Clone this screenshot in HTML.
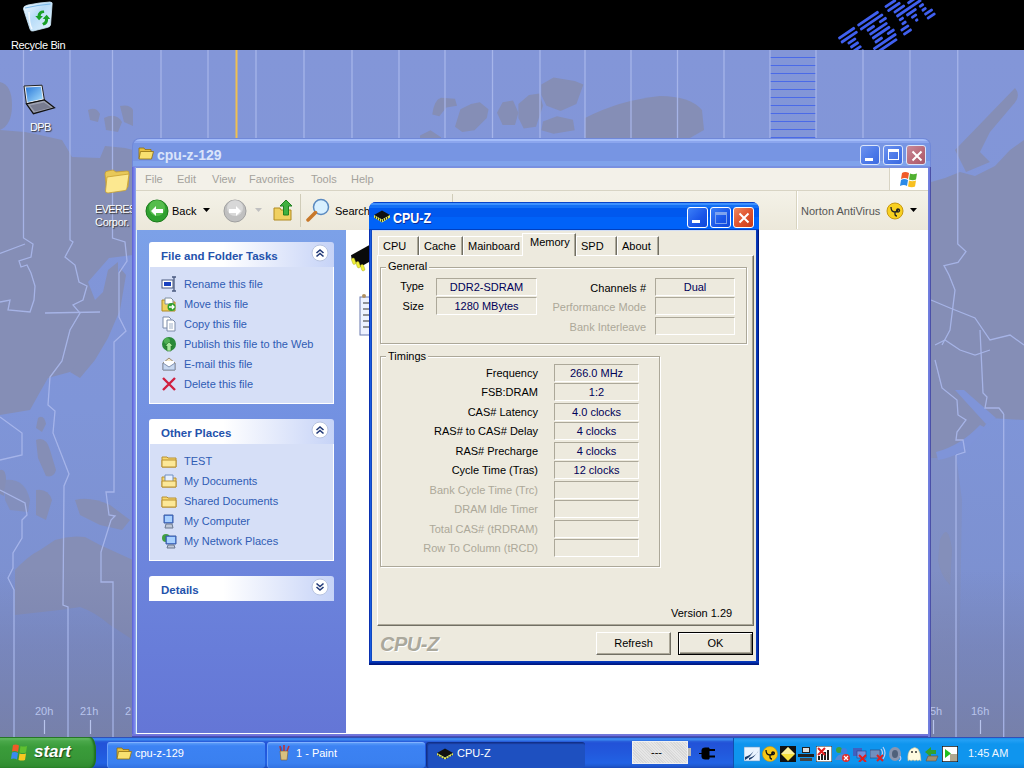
<!DOCTYPE html>
<html><head><meta charset="utf-8">
<style>
*{box-sizing:border-box}
body{margin:0;width:1024px;height:768px;overflow:hidden;position:relative;background:#8296d6;font-family:"Liberation Sans",sans-serif;font-size:11px}
.a{position:absolute}
.t{white-space:nowrap}
.xpb{width:21px;height:21px;border:1px solid #fff;border-radius:3px;background:linear-gradient(135deg,#3c80f8,#1a55e8 60%,#1048d8)}
.xpb.cl{background:linear-gradient(135deg,#f08a60,#e05530 50%,#c83a18)}
.tp{background:#edeade;border-top:1px solid #fff;border-left:1px solid #fff;border-right:1px solid #716f64;border-bottom:1px solid #716f64;box-shadow:inset -1px -1px 0 #aca899}
.tab{height:19px;background:#edeade;border-top:1px solid #fff;border-left:1px solid #fff;border-right:1px solid #716f64;text-align:left;padding-left:4px;line-height:16px;padding-top:1px;white-space:nowrap;box-shadow:inset -1px 0 0 #aca899}
.tab.sel{line-height:14px;z-index:1;border-bottom:none;padding-left:7px}
.gb{border:1px solid #aca899;box-shadow:1px 1px 0 #fff, inset 1px 1px 0 #fff}
.gt{background:#edeade;padding:0 2px;line-height:13px}
.lb{line-height:13px;color:#000}
.dis{color:#aca899;text-shadow:none}
.vb{height:18px;border-top:1px solid #aca899;border-left:1px solid #aca899;border-right:1px solid #fff;border-bottom:1px solid #fff;text-align:center;line-height:16px;color:#000058;white-space:nowrap}
.btn{background:#edeade;border-top:1px solid #fff;border-left:1px solid #fff;border-right:1px solid #716f64;border-bottom:1px solid #716f64;box-shadow:inset -1px -1px 0 #aca899;text-align:center;line-height:20px;color:#000}
.btn.def{border:1px solid #000;box-shadow:inset 1px 1px 0 #fff,inset -1px -1px 0 #716f64,inset -2px -2px 0 #aca899}
.xpbi{width:20px;height:20px;border:1px solid #dce6fa;border-radius:3px;background:linear-gradient(135deg,#6d92ee,#4a78e8 60%,#3c6ae0)}
.xpbi.cli{background:linear-gradient(135deg,#c88a98,#b86878 60%,#a85868)}
.mn{top:173px;font-size:11px;line-height:13px;color:#a4a29c}
.tbh{height:25px;border-radius:3px 3px 0 0;background:linear-gradient(90deg,#fff 0,#fff 40%,#c6d3f7 100%)}
.tbt{font:bold 11.5px/13px 'Liberation Sans',sans-serif;color:#2452ac}
.tbb{background:#d6dff7;border:1px solid #fff;border-top:none}
.tk{font-size:11px;line-height:13px;color:#2f5cb4}
.tbtn{height:26px;border-radius:3px;background:linear-gradient(#5a9cf8 0,#3c82f3 3px,#3a80f0 20px,#3070e0 26px);border-top:1px solid #80b0ff;border-left:1px solid #6aa0fa}
.tbtn.act{background:#1e50c0;border-top:1px solid #10308a;border-left:1px solid #10308a;box-shadow:inset 1px 1px 1px #1a3a9a}
.tbx{top:747px;font-size:11px;line-height:13px;color:#fff}
</style></head>
<body>
<!-- DESKTOP BACKGROUND -->
<svg class="a" style="left:0;top:0" width="1024" height="768" viewBox="0 0 1024 768">
  <defs>
    <linearGradient id="sea" x1="0" y1="0" x2="0" y2="1">
      <stop offset="0" stop-color="#8396d8"/>
      <stop offset="0.5" stop-color="#7f95d8"/>
      <stop offset="1" stop-color="#7a8cc8"/>
    </linearGradient>
    <linearGradient id="dark" x1="0" y1="0" x2="0" y2="1">
      <stop offset="0" stop-color="#747ca8" stop-opacity="0"/>
      <stop offset="0.45" stop-color="#747ca8" stop-opacity="0.45"/>
      <stop offset="1" stop-color="#767ea4" stop-opacity="0.85"/>
    </linearGradient>
  </defs>
  <rect x="0" y="50" width="1024" height="718" fill="url(#sea)"/>
  <g fill="#858eb6">
    <!-- Asia left -->
    <path d="M0 130 L25 132 L40 135 L62 140 L68 150 L72 157 L100 158 L105 146 L125 148 L133 150 L133 255 L109 258 L88 282 L95 300 L103 292 L108 270 L118 262 L118 300 L108 320 L96 345 L70 372 L48 378 L40 392 L30 410 L0 415 Z"/>
    <path d="M0 82 Q12 85 12 105 Q12 125 0 130 Z"/>
    <!-- Japan -->
    <path d="M120 268 L126 275 L120 310 L108 338 L95 360 L80 378 L70 372 L88 350 L102 322 L112 292 Z"/>
    <!-- islands -->
    <path d="M38 418 Q44 414 46 424 L42 432 L36 428 Z"/>
    <path d="M36 440 Q46 436 50 450 L56 470 Q54 478 46 476 L38 458 Z"/>
    <path d="M0 470 Q6 468 6 480 L4 496 L0 494 Z"/>
    <path d="M5 480 Q25 478 30 500 L28 512 L10 510 L5 500 Z" opacity=".8"/>
    <path d="M36 490 Q48 488 52 500 L46 520 L36 515 Z"/>
    <path d="M75 500 Q90 496 110 505 L130 520 L122 530 L100 525 L80 515 Z"/>
    <path d="M88 110 Q96 106 100 114 L98 122 L90 120 Z"/>
    <path d="M104 118 Q116 112 122 122 L118 132 L106 130 Z"/>
    <path d="M120 106 Q130 104 133 110 L133 126 L124 122 Z"/>
    <!-- Australia -->
    <path d="M15 570 Q28 556 40 550 L55 540 Q70 535 85 537 L100 545 L133 560 L133 640 L110 625 Q95 612 80 607 L60 610 L15 615 Z"/>
    <!-- Canadian islands -->
    <path d="M432.3 114.5 Q434 100 441 97.8 L455 98.7 L457 105.7 L446.4 107.5 L439.3 116.2 Z"/>
    <path d="M455 126.8 L460.4 109.2 L471 104 L479.8 102.2 L488.5 109.2 L486.8 118 L474.5 130.3 L462.2 132 Z"/>
    <path d="M497 112.7 L502.6 102.2 L513 100.4 L518.4 112.7 L515 125 L502.6 125 Z"/>
    <path d="M518.4 104 L529 95 L539.5 93.4 L543 105.7 L536 126.8 L523.7 128.5 L518.4 118 Z"/>
    <path d="M541.3 84.6 L553.6 77.6 L574.7 81 L583.4 84.6 L576.4 104 L560.6 111 L546.5 105.7 L541.3 95 Z"/>
    <path d="M543 121.5 L557 116.2 L573 119.8 L574.7 130.3 L553.6 133.8 L541.3 130.3 Z"/>
    <path d="M420 135.6 L430.5 130.3 L441 137.3 L441 138 L420 138 Z"/>
    <!-- Greenland -->
    <path d="M585 118 Q620 100 660 96 Q690 96 702 110 L704 130 L690 138 L585 138 Z"/>
    <!-- right: Scandinavia + Europe -->
    <path d="M1015 88 Q1022 96 1012 106 L990 132 L980 152 L990 162 L966 172 L955 150 Z"/>
    <path d="M931 182 L945 178 L960 172 L975 176 L995 166 L1010 150 L1024 140 L1024 420 L990 418 L975 440 L960 452 L940 458 L931 458 Z"/><path d="M931 458 L956 455 L962 500 L958 738 L931 738 Z" opacity=".45"/>
    
    
  </g>
  <path d="M955 390 L964 390 L996 418 L986 424 Z M936 452 Q960 446 980 425 L986 428 Q965 456 938 460 Z" fill="#7f94d8"/>
  <path d="M940 540 Q948 520 952 550 L950 585 Q940 575 938 560 Z" fill="#858eb6" opacity=".8"/>
  <rect x="0" y="570" width="1024" height="168" fill="url(#dark)"/>
  <!-- stripes block -->
  <g stroke="#4a6ae8" stroke-width="1">
    <path d="M770 57.5h46M770 65.5h46M770 73.5h46M770 81.5h46M770 89.5h46M770 97.5h46M770 105.5h46M770 113.5h46M770 121.5h46M770 129.5h46M770 137.5h46"/>
  </g>
  <!-- time zone lines -->
  <g stroke="#aab8ec" stroke-width="1.3" fill="none" opacity=".9">
    <path d="M23.5 50V238L33 244L31 257L19 261L21 267L27 265L31 273L35 286L34 300L30 312L8 310L10 300L0 302"/>
    <path d="M0 253.5L25 244"/>
    <path d="M70 50V240L73 242L65 257L75 265L79 282L87 286L83 300L73 305L80 313L70 330L62 361L50 377L48 405L55 411L53 433L69 474L64 486L63 605L68 607L68 738"/>
    <path d="M45 313L100 312"/>
    <path d="M112.5 50V238L125 242L127 261L119 273L119 317L126 331L114 342L114 492L106 492L109 515L115 516L111 520L101 552L101 582L113 582L113 738"/>
    <path d="M0 417L22 433L22 455L0 460"/>
    <path d="M0 490L25 503L27 515L22 520L22 538L13 553L13 568L8 578L14 590L14 738"/>
    <path d="M161 50V140M208 50V140M256 50V140M304 50V140M352 50V140M399 50V140M445 50V140M492.5 50V140M540 50V140M585 50V140M631 50V140M677.5 50V140M724 50V140M770 50V140M816 50V140M863 50V140M910 50V140"/>
    <path d="M957.75 50V244L966 251.5L958 262.5L944 265.6L949 275L955 290L950 330L942 345"/>
    <path d="M956 455V738"/>
    <path d="M1003.7 414V738"/>
    <path d="M931 300L950 308L975 318L990 340L1010 335L1024 345"/>
    <path d="M935 345L945 340L960 350L975 355L990 350"/>
    <path d="M935 360L942 388L957 400L958 415L966 420L957 432L956 440L963 440L965 452L956 455"/>
    <path d="M980 330L983 393L987 397L985 408L999 408L1003.7 414"/>
  </g>
  <path d="M236.5 50V138" stroke="#f0c050" stroke-width="2"/>
  <!-- time labels -->
  <g font-family="Liberation Sans" font-size="11" fill="#b8c4ec">
    <text x="35" y="715">20h</text><text x="80" y="715">21h</text><text x="125" y="715">2</text>
    <text x="930" y="715">5h</text><text x="971" y="715">16h</text>
  </g>
  <g stroke="#b8c4ec" stroke-width="1.2"><path d="M44.5 720v14M90.5 720v14M933.5 720v14M980.5 720v14"/></g>
</svg>
<div class="a" style="left:0;top:0;width:1024px;height:50px;background:#000"></div>
<!-- IBM logo -->
<svg class="a" style="left:0;top:0" width="1024" height="50" viewBox="0 0 1024 50">
  <g transform="translate(837.6,37.5) rotate(-34) scale(1.1,1.05)" fill="#4060f0"><rect x="0" y="0.0" width="18" height="2.7" rx="1"/><rect x="0" y="4.5" width="18" height="2.7" rx="1"/><rect x="4.5" y="9.0" width="9.0" height="2.7" rx="1"/><rect x="4.5" y="13.5" width="9.0" height="2.7" rx="1"/><rect x="4.5" y="18.0" width="9.0" height="2.7" rx="1"/><rect x="4.5" y="22.5" width="9.0" height="2.7" rx="1"/><rect x="0" y="27.0" width="18" height="2.7" rx="1"/><rect x="0" y="31.5" width="18" height="2.7" rx="1"/><rect x="21" y="0.0" width="23" height="2.7" rx="1"/><rect x="21" y="4.5" width="25" height="2.7" rx="1"/><rect x="25.5" y="9.0" width="8.5" height="2.7" rx="1"/><rect x="39" y="9.0" width="8" height="2.7" rx="1"/><rect x="25.5" y="13.5" width="19.5" height="2.7" rx="1"/><rect x="25.5" y="18.0" width="19.5" height="2.7" rx="1"/><rect x="25.5" y="22.5" width="8.5" height="2.7" rx="1"/><rect x="39" y="22.5" width="8" height="2.7" rx="1"/><rect x="21" y="27.0" width="25" height="2.7" rx="1"/><rect x="21" y="31.5" width="23" height="2.7" rx="1"/><rect x="51" y="0.0" width="12" height="2.7" rx="1"/><rect x="74" y="0.0" width="12" height="2.7" rx="1"/><rect x="51" y="4.5" width="14" height="2.7" rx="1"/><rect x="72" y="4.5" width="14" height="2.7" rx="1"/><rect x="55" y="9.0" width="12" height="2.7" rx="1"/><rect x="70" y="9.0" width="12" height="2.7" rx="1"/><rect x="55" y="13.5" width="27" height="2.7" rx="1"/><rect x="55" y="18.0" width="5" height="2.7" rx="1"/><rect x="63" y="18.0" width="11" height="2.7" rx="1"/><rect x="77" y="18.0" width="5" height="2.7" rx="1"/><rect x="55" y="22.5" width="5" height="2.7" rx="1"/><rect x="65.5" y="22.5" width="6.0" height="2.7" rx="1"/><rect x="77" y="22.5" width="5" height="2.7" rx="1"/><rect x="51" y="27.0" width="9" height="2.7" rx="1"/><rect x="67" y="27.0" width="3" height="2.7" rx="1"/><rect x="77" y="27.0" width="9" height="2.7" rx="1"/><rect x="51" y="31.5" width="9" height="2.7" rx="1"/><rect x="77" y="31.5" width="9" height="2.7" rx="1"/></g>
</svg>
<!-- desktop icons -->
<svg class="a" style="left:20px;top:0px" width="36" height="34" viewBox="0 0 36 34">
  <defs><linearGradient id="rb" x1="0" y1="0" x2="1" y2="1"><stop offset="0" stop-color="#f4faff"/><stop offset=".45" stop-color="#b8dcf8"/><stop offset="1" stop-color="#e4f4ff"/></linearGradient></defs>
  <path d="M3.5 9 Q3 6 8 5 Q20 2.5 30 2 Q33 2 32 5 L30.5 25 Q30 27 27 27.5 L13 31 Q10.5 31.5 10 29 Z" fill="url(#rb)" stroke="#d0ecfc" stroke-width=".8"/>
  <path d="M5 8 Q18 5 30.5 4" stroke="#7ab8e8" stroke-width="1.2" fill="none"/>
  <path d="M9 12 Q9 24 12 29" stroke="#fff" stroke-width="1.5" fill="none" opacity=".8"/>
  <path d="M24 10.5 a5.5 5.5 0 0 0 -6.5 5.5 l-2.2 0 3.8 4.2 3.8 -4.2 -2.2 0 a3.2 3.2 0 0 1 3.5 -3 z" fill="#18a028"/>
  <path d="M23.5 25.5 a5.5 5.5 0 0 0 4.5 -6.5 l2.2 0 -3.5 -4.3 -4 4 2.2 0.2 a3.2 3.2 0 0 1 -2.8 4 z" fill="#18a028"/>
</svg>
<div class="a t" style="left:11px;top:39px;font-size:11px;line-height:13px;color:#fff;letter-spacing:-0.35px">Recycle Bin</div>
<svg class="a" style="left:20px;top:82px" width="38" height="34" viewBox="0 0 38 34">
  <defs><linearGradient id="scr" x1="0" y1="0" x2="1" y2="1"><stop offset="0" stop-color="#2a78d8"/><stop offset="1" stop-color="#a8e0ff"/></linearGradient></defs>
  <path d="M4 4 L22 3.2 L24.4 18 L6.4 21.9 Z" fill="#e8ecf4" stroke="#222" stroke-width="1"/>
  <path d="M5.8 5.5 L20.8 4.8 L22.6 16.8 L7.6 20 Z" fill="url(#scr)"/>
  <path d="M6.4 21.9 L24.4 18 L34.5 25.8 L13.4 31.7 Z" fill="#9ca0b0" stroke="#111" stroke-width="1.2"/>
  <path d="M10 23.5 L24 20.5 L31 25.5 L15 29.5 Z" fill="#787c90"/>
</svg>
<div class="a t" style="left:30px;top:121px;font-size:11px;line-height:13px;color:#fff;letter-spacing:-0.6px;text-shadow:1px 1px 1px #333">DPB</div>
<svg class="a" style="left:103px;top:169px" width="28" height="26" viewBox="0 0 28 26">
  <path d="M2 5 Q2 2 5 2 L10 1 L13 3 L24 2 Q26 2 26 4 L25 18 L4 23 Z" fill="#e8c858" stroke="#c8a030" stroke-width=".8"/>
  <path d="M4 8 L26 5 L24 19 Q24 21 22 21.5 L5 24 Q2.5 24 2.5 22 Z" fill="#fce890" stroke="#c8a030" stroke-width=".8"/>
</svg>
<div class="a t" style="left:95px;top:203px;font-size:11px;line-height:13px;color:#fff;letter-spacing:-0.7px;text-shadow:1px 1px 1px #333">EVERES</div>
<div class="a t" style="left:95px;top:216px;font-size:11px;line-height:13px;color:#fff;letter-spacing:-0.3px;text-shadow:1px 1px 1px #333">Corpor.</div>
<!-- EXPLORER WINDOW -->
<div class="a" style="left:132px;top:138px;width:799px;height:599px;background:#7088d8;border-radius:8px 8px 0 0"></div>
<div class="a" style="left:133px;top:139px;width:797px;height:29px;background:#8ca6ee;border-radius:7px 7px 0 0;background:linear-gradient(#a3bcf9 0,#a3bcf9 2px,#8ca6ee 2px,#8ca6ee 4px,#7795e3 4px,#7795e3 22px,#7fa2eb 22px,#7fa2eb 27px,#7890e0 27px,#7890e0 29px,#7a96e4 29px)"></div>
<div class="a" style="left:132px;top:167px;width:4px;height:570px;background:linear-gradient(90deg,#6068d8 0,#6068d8 1px,#7078e4 1px,#7078e4 2px,#7a86ec 2px,#7a86ec 3px,#8aa0e8 3px)"></div><div class="a" style="left:132px;top:734px;width:799px;height:3px;background:linear-gradient(#7078d8 0,#7078d8 1px,#7070e0 1px,#7070e0 2px,#4a50b0 2px)"></div>
<div class="a" style="left:928px;top:167px;width:3px;height:570px;background:linear-gradient(90deg,#7080dc 0,#7080dc 1px,#7078e0 1px,#7078e0 2px,#4a50a8 2px)"></div>
<svg class="a" style="left:138px;top:146px" width="16" height="14" viewBox="0 0 16 14"><path d="M1 2h5l1 1.5h6v9H1z" fill="#e8c040" stroke="#907010" stroke-width=".8"/><path d="M2.5 5.5h13l-2 7.5H1z" fill="#f8e070" stroke="#907010" stroke-width=".8"/></svg>
<div class="a t" style="left:157px;top:146px;font:bold 14px/18px 'Liberation Sans',sans-serif;color:#dae4fa;letter-spacing:0px">cpu-z-129</div>
<div class="a xpbi" style="left:860px;top:145px"><div class="a" style="left:4px;top:12px;width:8px;height:3px;background:#fff"></div></div>
<div class="a xpbi" style="left:883px;top:145px"><div class="a" style="left:4px;top:3px;width:11px;height:11px;border:1px solid #fff;border-top-width:3px"></div></div>
<div class="a xpbi cli" style="left:906px;top:145px"><svg class="a" style="left:4px;top:4px" width="12" height="12"><path d="M1.5 1.5L10.5 10.5M10.5 1.5L1.5 10.5" stroke="#fff" stroke-width="2"/></svg></div>
<div class="a" style="left:136px;top:168px;width:792px;height:566px;background:#fff"></div>
<!-- menu bar -->
<div class="a" style="left:136px;top:168px;width:792px;height:23px;background:#f3f1e9;border-bottom:1px solid #d8d4c4"></div>
<div class="a" style="left:889px;top:168px;width:39px;height:22px;background:#fff;border-left:1px solid #d8d4c4"></div>
<svg class="a" style="left:899px;top:170px" width="20" height="18" viewBox="0 0 20 18"><path d="M3 3q3-2 7 0l-1 6q-3-2-7 0z" fill="#f05a28"/><path d="M11 3.5q3 1.5 7 0l-1 6q-3 1.5-7 0z" fill="#50b030"/><path d="M2 10q3-2 7 0l-1 6q-3-2-7 0z" fill="#2a8ae8"/><path d="M10 10.5q3 1.5 7 0l-1 6q-3 1.5-7 0z" fill="#f8c020"/></svg>
<div class="a t mn" style="left:145px">File</div>
<div class="a t mn" style="left:177px">Edit</div>
<div class="a t mn" style="left:212px">View</div>
<div class="a t mn" style="left:249px">Favorites</div>
<div class="a t mn" style="left:311px">Tools</div>
<div class="a t mn" style="left:351px">Help</div>
<!-- toolbar -->
<div class="a" style="left:136px;top:191px;width:792px;height:39px;background:linear-gradient(#f4f2e8,#ece8da)"></div>
<div class="a" style="left:300px;top:194px;width:1px;height:33px;background:#d0ccb8"></div>
<div class="a" style="left:452px;top:194px;width:1px;height:33px;background:#d0ccb8"></div>
<div class="a" style="left:796px;top:191px;width:1px;height:38px;background:#d8d4c0;box-shadow:1px 0 0 #fff"></div>
<svg class="a" style="left:145px;top:199px" width="24" height="24" viewBox="0 0 24 24"><circle cx="12" cy="12" r="11" fill="#30a030" stroke="#1a7a1a"/><circle cx="12" cy="9" r="8" fill="#70d060" opacity=".6"/><path d="M6 12l5-5v3h7v4h-7v3z" fill="#fff"/></svg>
<div class="a t" style="left:172px;top:205px;font-size:11px;line-height:13px;color:#000">Back</div>
<svg class="a" style="left:203px;top:208px" width="8" height="5"><path d="M0 0h7l-3.5 4z" fill="#000"/></svg>
<svg class="a" style="left:223px;top:199px" width="24" height="24" viewBox="0 0 24 24"><circle cx="12" cy="12" r="11" fill="#c0c0c0" stroke="#a0a0a0"/><circle cx="12" cy="9" r="8" fill="#e8e8e8" opacity=".6"/><path d="M18 12l-5-5v3H6v4h7v3z" fill="#fff"/></svg>
<svg class="a" style="left:255px;top:208px" width="8" height="5"><path d="M0 0h7l-3.5 4z" fill="#c0c0c0"/></svg>
<svg class="a" style="left:273px;top:198px" width="22" height="24" viewBox="0 0 22 24"><path d="M1 10h6l1 2h10v10H1z" fill="#f0d060" stroke="#b08a20"/><path d="M13 2l6 6h-3.5v9h-5V8H7z" fill="#40b040" stroke="#208020"/></svg>
<svg class="a" style="left:306px;top:198px" width="25" height="25" viewBox="0 0 25 25"><circle cx="15" cy="9" r="7.5" fill="#d8f0ff" stroke="#5a8ac0" stroke-width="1.5"/><path d="M9.5 14.5L2 22" stroke="#c8782a" stroke-width="3.5" stroke-linecap="round"/></svg>
<div class="a t" style="left:335px;top:205px;font-size:11px;line-height:13px;color:#000">Search</div>
<div class="a t" style="left:801px;top:205px;font-size:11px;line-height:13px;color:#555">Norton AntiVirus</div>
<svg class="a" style="left:886px;top:202px" width="18" height="18" viewBox="0 0 18 18"><circle cx="9" cy="9" r="8" fill="#f8d020" stroke="#c89810"/><path d="M5 5q0 5 4 5q3 0 3-3M12 7a1.5 1.5 0 1 0 .1 0M9 10v2q0 2 2 2" stroke="#222" stroke-width="1.3" fill="none"/></svg>
<svg class="a" style="left:910px;top:208px" width="8" height="5"><path d="M0 0h7l-3.5 4z" fill="#000"/></svg>
<!-- left pane -->
<div class="a" style="left:136px;top:230px;width:210px;height:504px;background:linear-gradient(#7ca1e8,#6476d6);border-left:1px solid #e0f4fc;border-bottom:1px solid #fff"></div>
<div class="a tbh" style="left:149px;top:242px;width:185px"></div>
<div class="a t tbt" style="left:161px;top:250px">File and Folder Tasks</div>
<div class="a" style="left:311px;top:244px"><svg width="18" height="18"><circle cx="9" cy="9" r="8" fill="#fff" stroke="#b8c4e0"/><path d="M5.5 9l3.5-3 3.5 3M5.5 12.5l3.5-3 3.5 3" stroke="#223a78" stroke-width="1.6" fill="none"/></svg></div>
<div class="a tbb" style="left:149px;top:267px;width:185px;height:137px"></div>
<div class="a" style="left:161px;top:276px;width:16px;height:16px"><svg width="16" height="16"><rect x="1" y="4" width="11" height="8" fill="#fff" stroke="#4a5a80"/><rect x="3" y="6" width="7" height="4" fill="#1840c0"/><path d="M13 1v14M11 1h4M11 15h4" stroke="#4a5a80" stroke-width="1.3"/></svg></div><div class="a t tk" style="left:184px;top:278px">Rename this file</div>
<div class="a" style="left:161px;top:296px;width:16px;height:16px"><svg width="16" height="16"><path d="M1 4h5l1 2h7v9H1z" fill="#f0d060" stroke="#b08a20"/><path d="M4 2h6l2 2v4H4z" fill="#fff" stroke="#8090a0"/><circle cx="10.5" cy="11" r="4" fill="#30a030"/><path d="M8 11h5M11 9l2 2-2 2" stroke="#fff" stroke-width="1.3" fill="none"/></svg></div><div class="a t tk" style="left:184px;top:298px">Move this file</div>
<div class="a" style="left:161px;top:316px;width:16px;height:16px"><svg width="16" height="16"><path d="M2 1h6l2 2v9H2z" fill="#fff" stroke="#7a8aa8"/><path d="M6 4h6l2 2v9H6z" fill="#fff" stroke="#7a8aa8"/><path d="M8 8h4M8 10h4M8 12h4" stroke="#a0b0c8"/></svg></div><div class="a t tk" style="left:184px;top:318px">Copy this file</div>
<div class="a" style="left:161px;top:336px;width:16px;height:16px"><svg width="16" height="16"><circle cx="8" cy="8" r="7" fill="#2a8a3a"/><circle cx="6" cy="5" r="3" fill="#60c060" opacity=".7"/><path d="M8 6l4 4h-2v5H6v-5H4z" fill="#a8e8a0" stroke="#207020" stroke-width=".6"/></svg></div><div class="a t tk" style="left:184px;top:338px">Publish this file to the Web</div>
<div class="a" style="left:161px;top:356px;width:16px;height:16px"><svg width="16" height="16"><path d="M2 7l6-5 6 5v7H2z" fill="#f4e8c8" stroke="#9a8a70"/><rect x="3" y="5" width="10" height="6" fill="#fff"/><path d="M2 7l6 4 6-4v7H2z" fill="#c8d8f0" stroke="#8090b0"/></svg></div><div class="a t tk" style="left:184px;top:358px">E-mail this file</div>
<div class="a" style="left:161px;top:376px;width:16px;height:16px"><svg width="16" height="16"><path d="M2 2L14 14M14 2L2 14" stroke="#d02040" stroke-width="2.4"/></svg></div><div class="a t tk" style="left:184px;top:378px">Delete this file</div>
<div class="a tbh" style="left:149px;top:419px;width:185px"></div>
<div class="a t tbt" style="left:161px;top:427px">Other Places</div>
<div class="a" style="left:311px;top:421px"><svg width="18" height="18"><circle cx="9" cy="9" r="8" fill="#fff" stroke="#b8c4e0"/><path d="M5.5 9l3.5-3 3.5 3M5.5 12.5l3.5-3 3.5 3" stroke="#223a78" stroke-width="1.6" fill="none"/></svg></div>
<div class="a tbb" style="left:149px;top:444px;width:185px;height:117px"></div>
<div class="a" style="left:161px;top:453px;width:16px;height:16px"><svg width="16" height="16"><path d="M1 4h5l1 1h8v9H1z" fill="#f8d870" stroke="#b89030"/><path d="M1 7h14v7H1z" fill="#fce898" stroke="#b89030"/></svg></div><div class="a t tk" style="left:184px;top:455px">TEST</div>
<div class="a" style="left:161px;top:473px;width:16px;height:16px"><svg width="16" height="16"><path d="M1 4h5l1 1h8v9H1z" fill="#f8d870" stroke="#b89030"/><path d="M4 2h8v7H4z" fill="#e8f0ff" stroke="#7090c0"/><path d="M1 8h14v6H1z" fill="#fce898" stroke="#b89030"/></svg></div><div class="a t tk" style="left:184px;top:475px">My Documents</div>
<div class="a" style="left:161px;top:493px;width:16px;height:16px"><svg width="16" height="16"><path d="M1 4h5l1 1h8v9H1z" fill="#f8d870" stroke="#b89030"/><path d="M1 7h14v7H1z" fill="#fce898" stroke="#b89030"/></svg></div><div class="a t tk" style="left:184px;top:495px">Shared Documents</div>
<div class="a" style="left:161px;top:513px;width:16px;height:16px"><svg width="16" height="16"><path d="M3 2h9v8H3z" fill="#5a8ae8" stroke="#3a5aa0"/><path d="M4 3h7v6H4z" fill="#a8d0ff"/><path d="M5 11h6l1 4H4z" fill="#c0c8d8" stroke="#6a7890"/></svg></div><div class="a t tk" style="left:184px;top:515px">My Computer</div>
<div class="a" style="left:161px;top:533px;width:16px;height:16px"><svg width="16" height="16"><circle cx="5" cy="5" r="4" fill="#40a040"/><path d="M5 3h10v8H5z" fill="#5a8ae8" stroke="#3a5aa0"/><path d="M6 4h8v6H6z" fill="#a8d0ff"/><path d="M7 12h6l1 3H6z" fill="#c0c8d8" stroke="#6a7890"/></svg></div><div class="a t tk" style="left:184px;top:535px">My Network Places</div>
<div class="a tbh" style="left:149px;top:576px;width:185px;border-radius:3px 3px 0 0"></div>
<div class="a t tbt" style="left:161px;top:584px">Details</div>
<div class="a" style="left:311px;top:578px"><svg width="18" height="18"><circle cx="9" cy="9" r="8" fill="#fff" stroke="#b8c4e0"/><path d="M5.5 5.5l3.5 3 3.5-3M5.5 9l3.5 3 3.5-3" stroke="#223a78" stroke-width="1.6" fill="none"/></svg></div>
<!-- content icons -->
<svg class="a" style="left:349px;top:243px" width="21" height="32" viewBox="0 0 21 32"><path d="M2 12.3 L20 2.2 L20 19 L11.3 24 L2.7 16 Z" fill="#0a0a0a"/><g fill="#f0f038" stroke="#a0a020" stroke-width=".4"><rect x="3" y="15" width="3.2" height="6.5" rx="1.4" transform="rotate(-20 4.5 18)"/><rect x="7.5" y="18.5" width="3.2" height="6.5" rx="1.4" transform="rotate(-20 9 21.5)"/><rect x="12" y="21.5" width="3.2" height="6.5" rx="1.4" transform="rotate(-20 13.5 24.5)"/></g></svg>
<svg class="a" style="left:359px;top:293px" width="11" height="44" viewBox="0 0 11 44"><rect x="1" y="4" width="10" height="38" fill="#eef2ff" stroke="#6a7ab0"/><path d="M4 10h7M4 16h7M4 22h7M4 28h7M4 34h7" stroke="#333" stroke-width="1.2"/><circle cx="5" cy="3" r="2" fill="#b09060"/></svg>

<!-- CPU-Z WINDOW -->
<div class="a" style="left:369px;top:202px;width:390px;height:463px;background:#0831d9;border-radius:7px 7px 0 0;overflow:hidden">
  <div class="a" style="left:0;top:0;width:390px;height:28px;background:linear-gradient(#0843c8 0,#0843c8 1px,#3d91ff 1px,#3d91ff 3px,#1470f5 3px,#1470f5 6px,#0058ee 6px,#0058ee 15px,#0062f8 15px,#0062f8 27px,#0040c0 27px)"></div>
  <div class="a" style="left:0;top:28px;width:1px;height:435px;background:#0a30b0"></div>
  <div class="a" style="left:1px;top:28px;width:1px;height:435px;background:#1a5ce0"></div>
  <div class="a" style="left:2px;top:28px;width:1px;height:435px;background:#1048c0"></div>
  <div class="a" style="left:387px;top:28px;width:1px;height:435px;background:#0838b8"></div>
  <div class="a" style="left:388px;top:28px;width:1px;height:435px;background:#0030b0"></div>
  <div class="a" style="left:389px;top:28px;width:1px;height:435px;background:#001880"></div>
  <div class="a" style="left:0;top:459px;width:390px;height:4px;background:linear-gradient(#0838b8 0,#0838b8 1px,#0030b0 1px,#0030b0 2px,#002090 2px,#002090 3px,#001880 3px)"></div>
</div>
<div class="a" style="left:372px;top:230px;width:384px;height:431px;background:#edeade;border-top:1px solid #d0dcf4"></div>
<!-- title icon -->
<svg class="a" style="left:373px;top:210px" width="18" height="13" viewBox="0 0 18 13">
  <path d="M1 5 L9 0.5 L17 5 L9 9.5 Z" fill="#111"/>
  <path d="M1 5 L9 9.5 L17 5 L17 7.5 L9 12.5 L1 7.5 Z" fill="#e8ec50"/>
  <path d="M2.5 6.3v2.2M4.5 7.4v2.2M6.5 8.5v2.2M8.5 9.5v2.4M10.5 8.8v2.2M12.5 7.7v2.2M14.5 6.6v2.2" stroke="#2a2a10" stroke-width="0.9"/>
</svg>
<div class="a t" style="left:393px;top:209px;font:bold 14.5px/18px 'Liberation Sans',sans-serif;color:#fff;transform:scaleX(0.86);transform-origin:0 0;text-shadow:1px 1px 0 #0a2a9a">CPU-Z</div>
<!-- title buttons -->
<div class="a xpb" style="left:687px;top:207px"><div class="a" style="left:4px;top:12px;width:8px;height:3px;background:#fff"></div></div>
<div class="a xpb" style="left:710px;top:207px"><div class="a" style="left:4px;top:4px;width:12px;height:12px;border:1px solid #7fa3ee;border-top-width:3px"></div></div>
<div class="a xpb cl" style="left:733px;top:207px"><svg class="a" style="left:4px;top:4px" width="12" height="12"><path d="M1.5 1.5L10.5 10.5M10.5 1.5L1.5 10.5" stroke="#fff" stroke-width="2"/></svg></div>
<!-- tabs -->
<div class="a tp" style="left:377px;top:255px;width:377px;height:371px"></div>
<div class="a tab" style="left:378px;top:236px;width:41px">CPU</div>
<div class="a tab" style="left:419px;top:236px;width:44px">Cache</div>
<div class="a tab" style="left:463px;top:236px;width:60px;border-right:none">Mainboard</div>
<div class="a tab sel" style="left:522px;top:233px;width:54px;height:23px">Memory</div>
<div class="a tab" style="left:576px;top:236px;width:41px">SPD</div>
<div class="a tab" style="left:617px;top:236px;width:42px">About</div>
<!-- General group -->
<div class="a gb" style="left:380px;top:267px;width:367px;height:77px"></div>
<div class="a t gt" style="left:386px;top:260px">General</div>
<div class="a t lb" style="right:600px;top:280px">Type</div><div class="a vb" style="left:436px;top:278px;width:101px">DDR2-SDRAM</div>
<div class="a t lb" style="right:600px;top:300px">Size</div><div class="a vb" style="left:436px;top:297px;width:101px">1280 MBytes</div>
<div class="a t lb" style="right:378px;top:282px">Channels #</div><div class="a vb" style="left:655px;top:278px;width:80px">Dual</div>
<div class="a t lb dis" style="right:378px;top:301px">Performance Mode</div><div class="a vb" style="left:655px;top:297px;width:80px"></div>
<div class="a t lb dis" style="right:378px;top:321px">Bank Interleave</div><div class="a vb" style="left:655px;top:317px;width:80px"></div>
<!-- Timings group -->
<div class="a gb" style="left:380px;top:356px;width:280px;height:211px"></div>
<div class="a t gt" style="left:386px;top:350px">Timings</div>
<div class="a t lb" style="right:486px;top:367px">Frequency</div><div class="a vb" style="left:554px;top:364px;width:85px">266.0 MHz</div>
<div class="a t lb" style="right:486px;top:386px">FSB:DRAM</div><div class="a vb" style="left:554px;top:383px;width:85px">1:2</div>
<div class="a t lb" style="right:486px;top:406px">CAS# Latency</div><div class="a vb" style="left:554px;top:403px;width:85px">4.0 clocks</div>
<div class="a t lb" style="right:486px;top:425px">RAS# to CAS# Delay</div><div class="a vb" style="left:554px;top:422px;width:85px">4 clocks</div>
<div class="a t lb" style="right:486px;top:445px">RAS# Precharge</div><div class="a vb" style="left:554px;top:442px;width:85px">4 clocks</div>
<div class="a t lb" style="right:486px;top:464px">Cycle Time (Tras)</div><div class="a vb" style="left:554px;top:461px;width:85px">12 clocks</div>
<div class="a t lb dis" style="right:486px;top:484px">Bank Cycle Time (Trc)</div><div class="a vb" style="left:554px;top:481px;width:85px"></div>
<div class="a t lb dis" style="right:486px;top:503px">DRAM Idle Timer</div><div class="a vb" style="left:554px;top:500px;width:85px"></div>
<div class="a t lb dis" style="right:486px;top:523px">Total CAS# (tRDRAM)</div><div class="a vb" style="left:554px;top:520px;width:85px"></div>
<div class="a t lb dis" style="right:486px;top:542px">Row To Column (tRCD)</div><div class="a vb" style="left:554px;top:539px;width:85px"></div>
<div class="a t lb" style="left:671px;top:607px">Version 1.29</div>
<div class="a t" style="left:380px;top:632px;font:italic bold 20px/24px 'Liberation Sans',sans-serif;color:#aaa89c;text-shadow:1px 1px 0 #fff;letter-spacing:-0.5px">CPU-Z</div>
<div class="a btn" style="left:596px;top:632px;width:75px;height:23px">Refresh</div>
<div class="a btn def" style="left:678px;top:632px;width:75px;height:23px">OK</div>

<!-- TASKBAR -->
<div class="a" style="left:0;top:737px;width:1024px;height:31px;background:linear-gradient(#3050b8 0,#3050b8 1px,#3a80ec 1px,#3a8af0 3px,#2a62dc 4px,#2252d8 6px,#2258dc 15px,#2262e4 26px,#1e58d0 29px,#1a48b8 31px)"></div>
<div class="a" style="left:0;top:737px;width:96px;height:31px;background:linear-gradient(#2a7a2a 0,#2a7a2a 1px,#64bc64 1px,#4aa84a 4px,#3a9c3a 10px,#379637 22px,#2f8a2f 31px);border-radius:0 6px 5px 0 / 0 14px 10px 0;box-shadow:inset -2px 0 2px #1e6e1e"></div>
<svg class="a" style="left:11px;top:744px" width="18" height="17" viewBox="0 0 18 17"><path d="M2 1q3-1 6 0.5l-1 6.5q-3-1.5-6-0.5z" fill="#f05a28"/><path d="M9.5 2q3 1 6.5 0l-1 6.5q-3 1-6.5 0z" fill="#60c030"/><path d="M1 8.5q3-1 6 0.5l-1 6.5q-3-1.5-6-0.5z" fill="#3a8af0"/><path d="M8.5 9.5q3 1 6.5 0l-1 6.5q-3 1-6.5 0z" fill="#f8c820"/></svg>
<div class="a t" style="left:34px;top:741px;font:italic bold 17px/22px 'Liberation Sans',sans-serif;color:#fff;text-shadow:1px 1px 1px #1a4a1a">start</div>
<div class="a tbtn" style="left:107px;top:742px;width:158px"></div>
<div class="a" style="left:116px;top:746px"><svg width="16" height="14" viewBox="0 0 16 14"><path d="M1 2h5l1 1.5h6v9H1z" fill="#e8c040" stroke="#907010" stroke-width=".8"/><path d="M2.5 5.5h13l-2 7.5H1z" fill="#f8e070" stroke="#907010" stroke-width=".8"/></svg></div>
<div class="a t tbx" style="left:135px">cpu-z-129</div>
<div class="a tbtn" style="left:267px;top:742px;width:158px"></div>
<svg class="a" style="left:277px;top:745px" width="14" height="16" viewBox="0 0 14 16"><path d="M3 6h8l-1 9H4z" fill="#d8c080" stroke="#806030" stroke-width=".6"/><path d="M4 6L3 1M7 6V0M10 6l2-5" stroke="#c03030" stroke-width="1.5"/><path d="M5 6l-1-4" stroke="#3060c0" stroke-width="1.2"/></svg>
<div class="a t tbx" style="left:296px">1 - Paint</div>
<div class="a tbtn act" style="left:426px;top:742px;width:159px"></div>
<div class="a" style="left:436px;top:748px"><svg width="18" height="12" viewBox="0 0 18 12"><path d="M1 5 L9 0.5 L17 5 L9 9.5 Z" fill="#111"/><path d="M1 5 L9 9.5 L17 5 L17 7 L9 11.5 L1 7 Z" fill="#e0e850"/><path d="M2.5 6.5v1.5M5 8v1.5M7.5 9.5v1.5M10.5 9.5v1.5M13 8v1.5M15.5 6.5v1.5" stroke="#333" stroke-width="0.9"/></svg></div>
<div class="a t tbx" style="left:457px">CPU-Z</div>
<!-- battery -->
<div class="a" style="left:632px;top:741px;width:56px;height:23px;background:repeating-linear-gradient(45deg,#e6e6e6 0,#e6e6e6 1px,#d8d8d8 1px,#d8d8d8 2px);border:1px solid #f0f0f0"></div>
<div class="a" style="left:688px;top:748px;width:3px;height:8px;background:#b8b8b8"></div>
<div class="a t" style="left:651px;top:746px;font-size:11px;line-height:13px;color:#000">---</div>
<svg class="a" style="left:699px;top:747px" width="17" height="13" viewBox="0 0 17 13"><path d="M0 6.5h3M3 3q0-2 3-2h4v11H6q-3 0-3-2z" fill="#000" stroke="#000"/><path d="M10 3h6M10 9.5h6" stroke="#000" stroke-width="2"/></svg>
<!-- tray -->
<div class="a" style="left:733px;top:738px;width:291px;height:30px;background:linear-gradient(#1a8ee8 0,#24a0f4 2px,#0f95ee 6px,#0f95ee 25px,#0b80d8 30px);border-left:1px solid #1050b0"></div>
<div class="a" style="left:744px;top:746px;width:16px;height:16px"><svg width="16" height="16"><rect x="0" y="1" width="16" height="14" fill="#eaf4ff" stroke="#6090c0" stroke-width=".6"/><path d="M1 14q6-3 9-10q-2 5-9 7z" fill="#1a3a6a"/><path d="M5 14q5-2 10-10q-3 6-10 8z" fill="#1a3a6a"/></svg></div><div class="a" style="left:762px;top:746px;width:16px;height:16px"><svg width="16" height="16"><circle cx="8" cy="8" r="7.5" fill="#f8c818" stroke="#c09010" stroke-width=".6"/><path d="M4 4q0 5 4 5q3 0 3-3M11 6a1.3 1.3 0 1 0 .1 0M8 9v2q0 2 2 2" stroke="#111" stroke-width="1.3" fill="none"/></svg></div><div class="a" style="left:780px;top:746px;width:16px;height:16px"><svg width="16" height="16"><rect x="0" y="0" width="16" height="16" fill="#111"/><path d="M1 8L8 1L15 8L8 15z" fill="#f8e040"/><path d="M8 1L15 8H1z" fill="#fff" opacity=".5"/></svg></div><div class="a" style="left:798px;top:746px;width:16px;height:16px"><svg width="16" height="16"><rect x="4" y="1" width="8" height="6" fill="#222"/><rect x="5" y="2" width="6" height="4" fill="#ddd"/><rect x="0" y="8" width="16" height="3" fill="#222"/><rect x="2" y="12" width="12" height="3" fill="#444"/></svg></div><div class="a" style="left:816px;top:746px;width:16px;height:16px"><svg width="16" height="16"><rect x="0" y="0" width="16" height="16" fill="#fff" stroke="#222"/><path d="M3 14v-4M6 14v-6M9 14v-8M12 14v-10" stroke="#222" stroke-width="2"/><path d="M2 2l7 7M9 2l-7 7" stroke="#e02020" stroke-width="2"/></svg></div><div class="a" style="left:834px;top:746px;width:16px;height:16px"><svg width="16" height="16"><circle cx="5" cy="4" r="3" fill="#40a040"/><circle cx="10" cy="5" r="3" fill="#4080e0"/><path d="M1 14q2-6 8-6q5 0 6 6z" fill="#5a8ad0"/><circle cx="12" cy="12" r="4" fill="#e03030"/><path d="M10 10l4 4M14 10l-4 4" stroke="#fff" stroke-width="1.2"/></svg></div><div class="a" style="left:852px;top:746px;width:16px;height:16px"><svg width="16" height="16"><rect x="1" y="2" width="9" height="8" fill="#4060c0"/><rect x="5" y="5" width="9" height="7" fill="#7090e0" stroke="#304080" stroke-width=".6"/><path d="M7 9l7 7M14 9l-7 7" stroke="#e02020" stroke-width="2"/></svg></div><div class="a" style="left:870px;top:746px;width:16px;height:16px"><svg width="16" height="16"><rect x="0" y="4" width="10" height="8" fill="#7090c0" stroke="#304070" stroke-width=".6"/><path d="M11 3q3 4 0 8M13 1q4 6 0 12" stroke="#c0d0f0" stroke-width="1.2" fill="none"/><path d="M7 9l6 6M13 9l-6 6" stroke="#e02020" stroke-width="2"/></svg></div><div class="a" style="left:888px;top:746px;width:16px;height:16px"><svg width="16" height="16"><ellipse cx="7" cy="8" rx="6" ry="7" fill="#8a96b0"/><ellipse cx="7" cy="8" rx="3" ry="4" fill="#50607a"/><path d="M12 10q2 3 -1 5" stroke="#c0c8f0" stroke-width="1.2" fill="none"/></svg></div><div class="a" style="left:906px;top:746px;width:16px;height:16px"><svg width="16" height="16"><path d="M2 15q-1-9 3-12q4-3 7 0q3 4 3 12q-2-2-3 0q-2-2-3 0q-2-2-4 0q-1-2-3 0z" fill="#fffbe0" stroke="#c0b890" stroke-width=".6"/><circle cx="6" cy="6" r="1" fill="#333"/><circle cx="10" cy="6" r="1" fill="#333"/></svg></div><div class="a" style="left:924px;top:746px;width:16px;height:16px"><svg width="16" height="16"><path d="M1 6l6-5v3h5v4H7v3z" fill="#30a030"/><path d="M4 10l10 0l-2 5H2z" fill="#a09070" stroke="#605040" stroke-width=".6"/></svg></div><div class="a" style="left:942px;top:746px;width:16px;height:16px"><svg width="16" height="16"><rect x="0" y="0" width="16" height="16" fill="#fff" stroke="#111" stroke-width="1.5"/><path d="M3 3v9l6-4.5z" fill="#20c020"/><rect x="8" y="8" width="7" height="7" fill="#b0a890"/></svg></div>
<div class="a t" style="left:968px;top:747px;font-size:11px;line-height:13px;color:#eef6ff">1:45 AM</div>

</body></html>
